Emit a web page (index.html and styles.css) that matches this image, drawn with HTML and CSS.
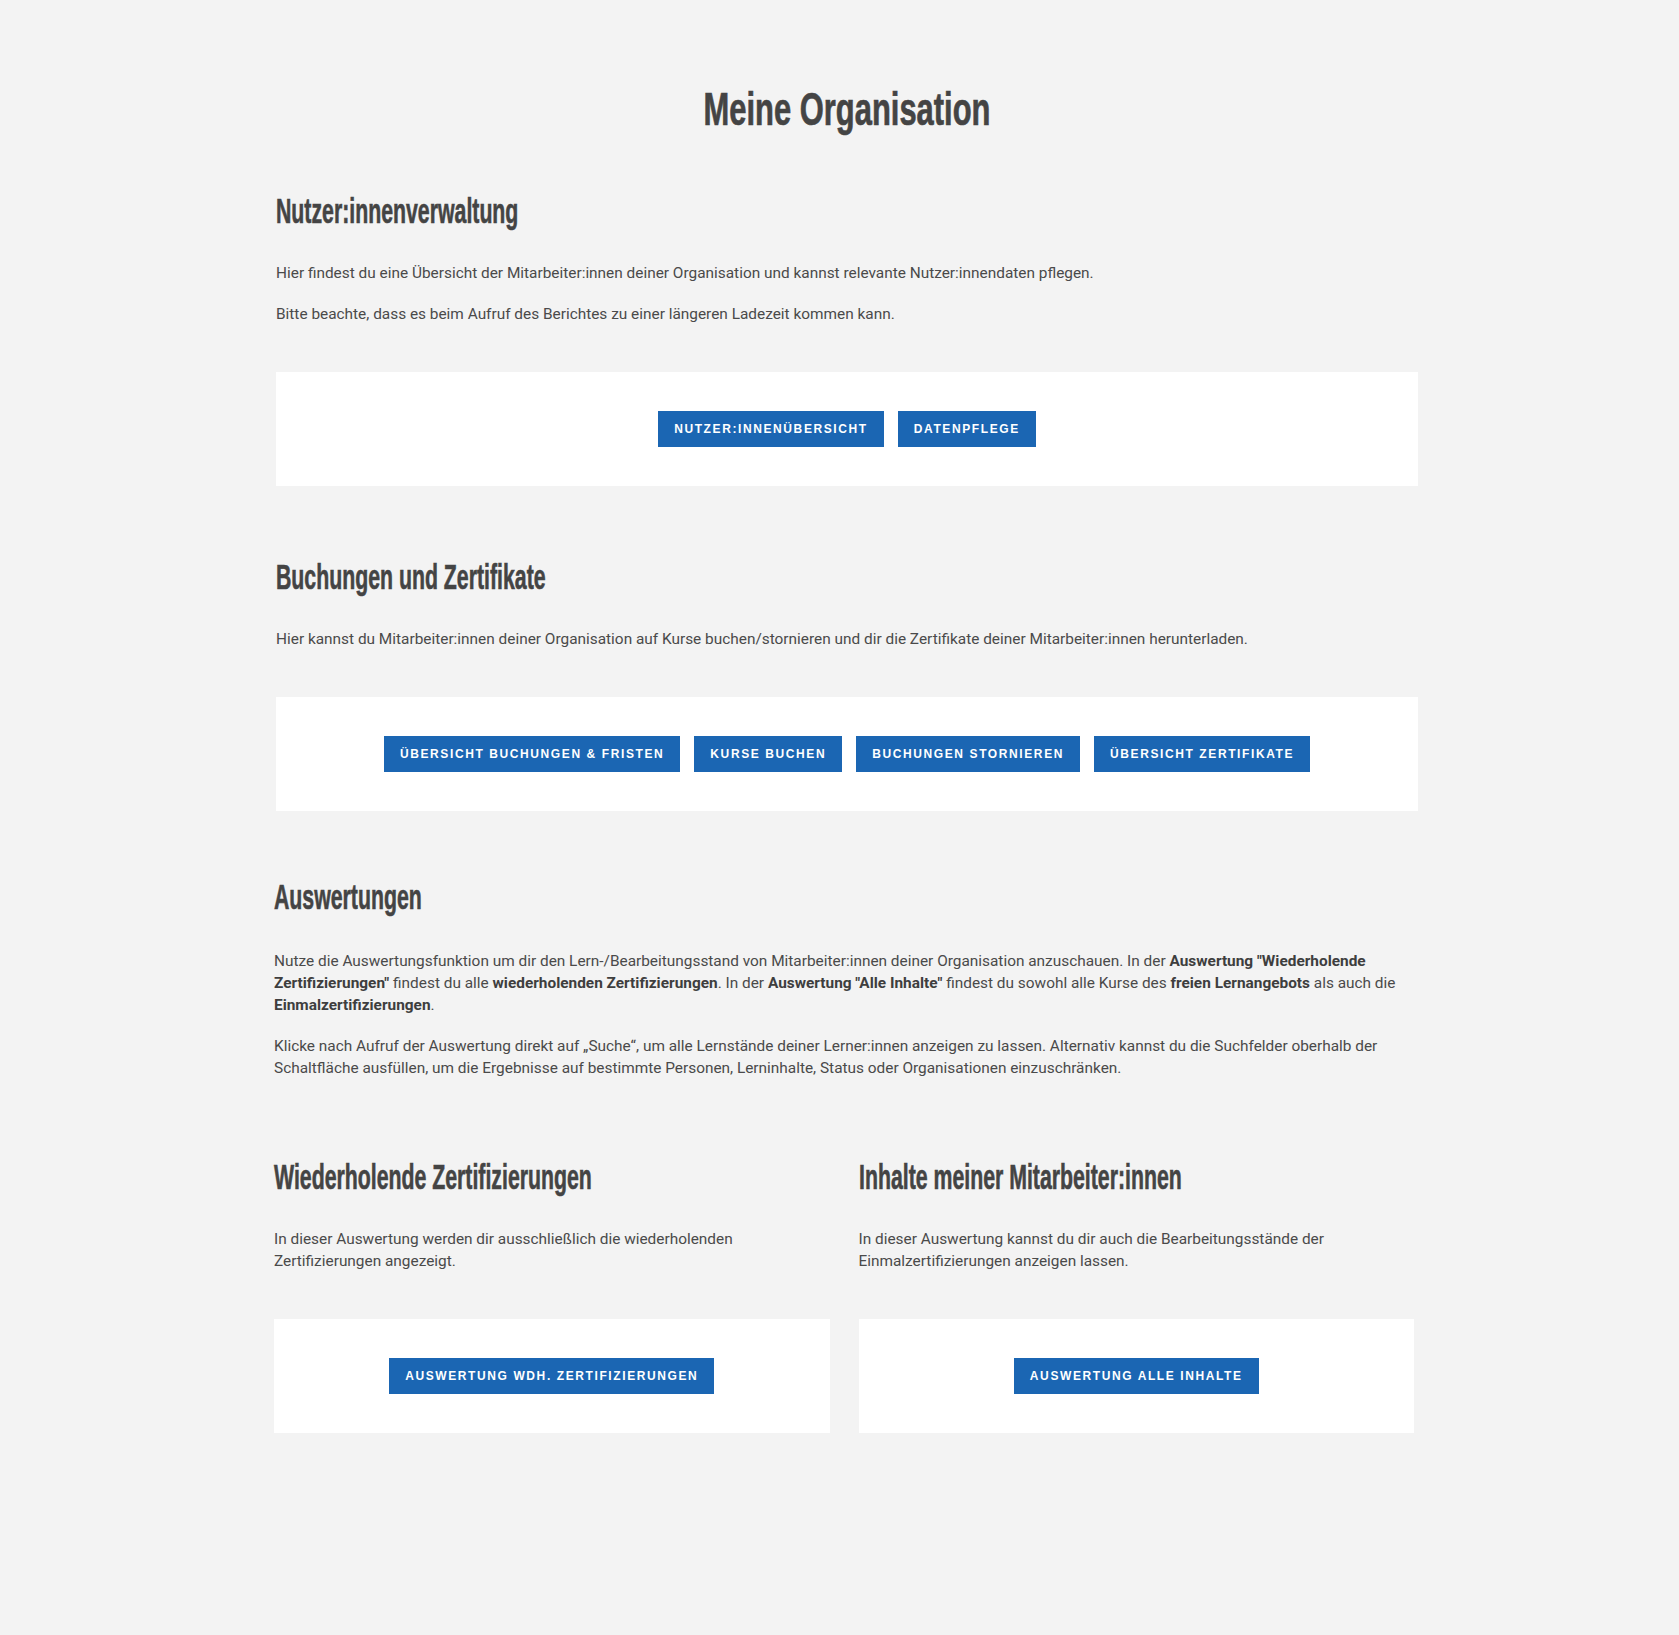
FILE: index.html
```html
<!DOCTYPE html>
<html lang="de">
<head>
<meta charset="utf-8">
<title>Meine Organisation</title>
<link rel="stylesheet" href="styles.css">
</head>
<body>
<main class="page">
  <h1 class="title">Meine Organisation</h1>

  <section class="section">
    <h2 class="heading">Nutzer:innenverwaltung</h2>
    <p class="text">Hier findest du eine Übersicht der Mitarbeiter:innen deiner Organisation und kannst relevante Nutzer:innendaten pflegen.</p>
    <p class="text">Bitte beachte, dass es beim Aufruf des Berichtes zu einer längeren Ladezeit kommen kann.</p>
    <div class="panel">
      <a class="btn" href="#">Nutzer:innenübersicht</a>
      <a class="btn" href="#">Datenpflege</a>
    </div>
  </section>

  <section class="section section-book">
    <h2 class="heading">Buchungen und Zertifikate</h2>
    <p class="text">Hier kannst du Mitarbeiter:innen deiner Organisation auf Kurse buchen/stornieren und dir die Zertifikate deiner Mitarbeiter:innen herunterladen.</p>
    <div class="panel">
      <a class="btn" href="#">Übersicht Buchungen &amp; Fristen</a>
      <a class="btn" href="#">Kurse buchen</a>
      <a class="btn" href="#">Buchungen stornieren</a>
      <a class="btn" href="#">Übersicht Zertifikate</a>
    </div>
  </section>

  <section class="section section-eval">
    <h2 class="heading heading-eval">Auswertungen</h2>
    <p class="text">Nutze die Auswertungsfunktion um dir den Lern-/Bearbeitungsstand von Mitarbeiter:innen deiner Organisation anzuschauen. In der <b>Auswertung "Wiederholende</b> <b>Zertifizierungen"</b> findest du alle <b>wiederholenden Zertifizierungen</b>. In der <b>Auswertung "Alle Inhalte"</b> findest du sowohl alle Kurse des <b>freien Lernangebots</b> als auch die <b>Einmalzertifizierungen</b>.</p>
    <p class="text">Klicke nach Aufruf der Auswertung direkt auf „Suche“, um alle Lernstände deiner Lerner:innen anzeigen zu lassen. Alternativ kannst du die Suchfelder oberhalb der Schaltfläche ausfüllen, um die Ergebnisse auf bestimmte Personen, Lerninhalte, Status oder Organisationen einzuschränken.</p>

    <div class="cols">
      <div class="col">
        <h2 class="heading">Wiederholende Zertifizierungen</h2>
        <p class="text text-narrow">In dieser Auswertung werden dir ausschließlich die wiederholenden Zertifizierungen angezeigt.</p>
        <div class="panel">
          <a class="btn" href="#">Auswertung Wdh. Zertifizierungen</a>
        </div>
      </div>
      <div class="col">
        <h2 class="heading">Inhalte meiner Mitarbeiter:innen</h2>
        <p class="text text-narrow">In dieser Auswertung kannst du dir auch die Bearbeitungsstände der Einmalzertifizierungen anzeigen lassen.</p>
        <div class="panel">
          <a class="btn" href="#">Auswertung alle Inhalte</a>
        </div>
      </div>
    </div>
  </section>
</main>
</body>
</html>
```

FILE: styles.css
```css
html, body {
  margin: 0;
  padding: 0;
}

body {
  background: #f3f3f3;
  color: #464646;
  font-family: Roboto, "Liberation Sans", Arial, sans-serif;
  min-height: 1635px;
}

.page {
  width: 1142px;
  margin: 0 auto;
  padding: 79px 0 120px 15px;
}

.title {
  margin: 0 0 52px;
  text-align: center;
  font-family: "Liberation Sans", Arial, sans-serif;
  font-weight: 700;
  font-size: 46px;
  line-height: 60px;
  color: #444444;
  -webkit-text-stroke: 0.7px #444444;
  transform: scaleX(0.672);
  transform-origin: center;
}

.heading {
  margin: 0 0 31px;
  font-family: "Liberation Sans", Arial, sans-serif;
  font-weight: 700;
  font-size: 35px;
  line-height: 40px;
  color: #444444;
  -webkit-text-stroke: 0.6px #444444;
  white-space: nowrap;
  transform: scaleX(0.608);
  transform-origin: left center;
}

.heading-eval {
  margin-bottom: 33px;
}

.text {
  margin: 0 0 19px;
  font-size: 15.4px;
  line-height: 22px;
  color: #4a4a4a;
}

.text b {
  font-weight: 700;
  color: #3e3e3e;
}

.text-narrow {
  max-width: 520px;
}

.section {
  margin-bottom: 71px;
}

.section-book {
  margin-bottom: 66px;
}

.panel {
  margin-top: 47px;
  background: #ffffff;
  padding: 39px 20px 39px;
  display: flex;
  justify-content: center;
  gap: 14px;
}

.btn {
  display: inline-block;
  background: #1b66b3;
  color: #ffffff;
  text-decoration: none;
  text-transform: uppercase;
  font-family: "Liberation Sans", Arial, sans-serif;
  font-size: 12px;
  font-weight: 700;
  letter-spacing: 1.6px;
  line-height: 36px;
  padding: 0 16px;
}

.section-eval {
  width: 1140px;
  margin-left: -2px;
}

.cols {
  margin-top: 78px;
  display: grid;
  grid-template-columns: 1fr 1fr;
  column-gap: 29px;
}

.col .heading {
  margin-bottom: 31px;
}

.col .panel {
  margin-top: 47px;
}
```
